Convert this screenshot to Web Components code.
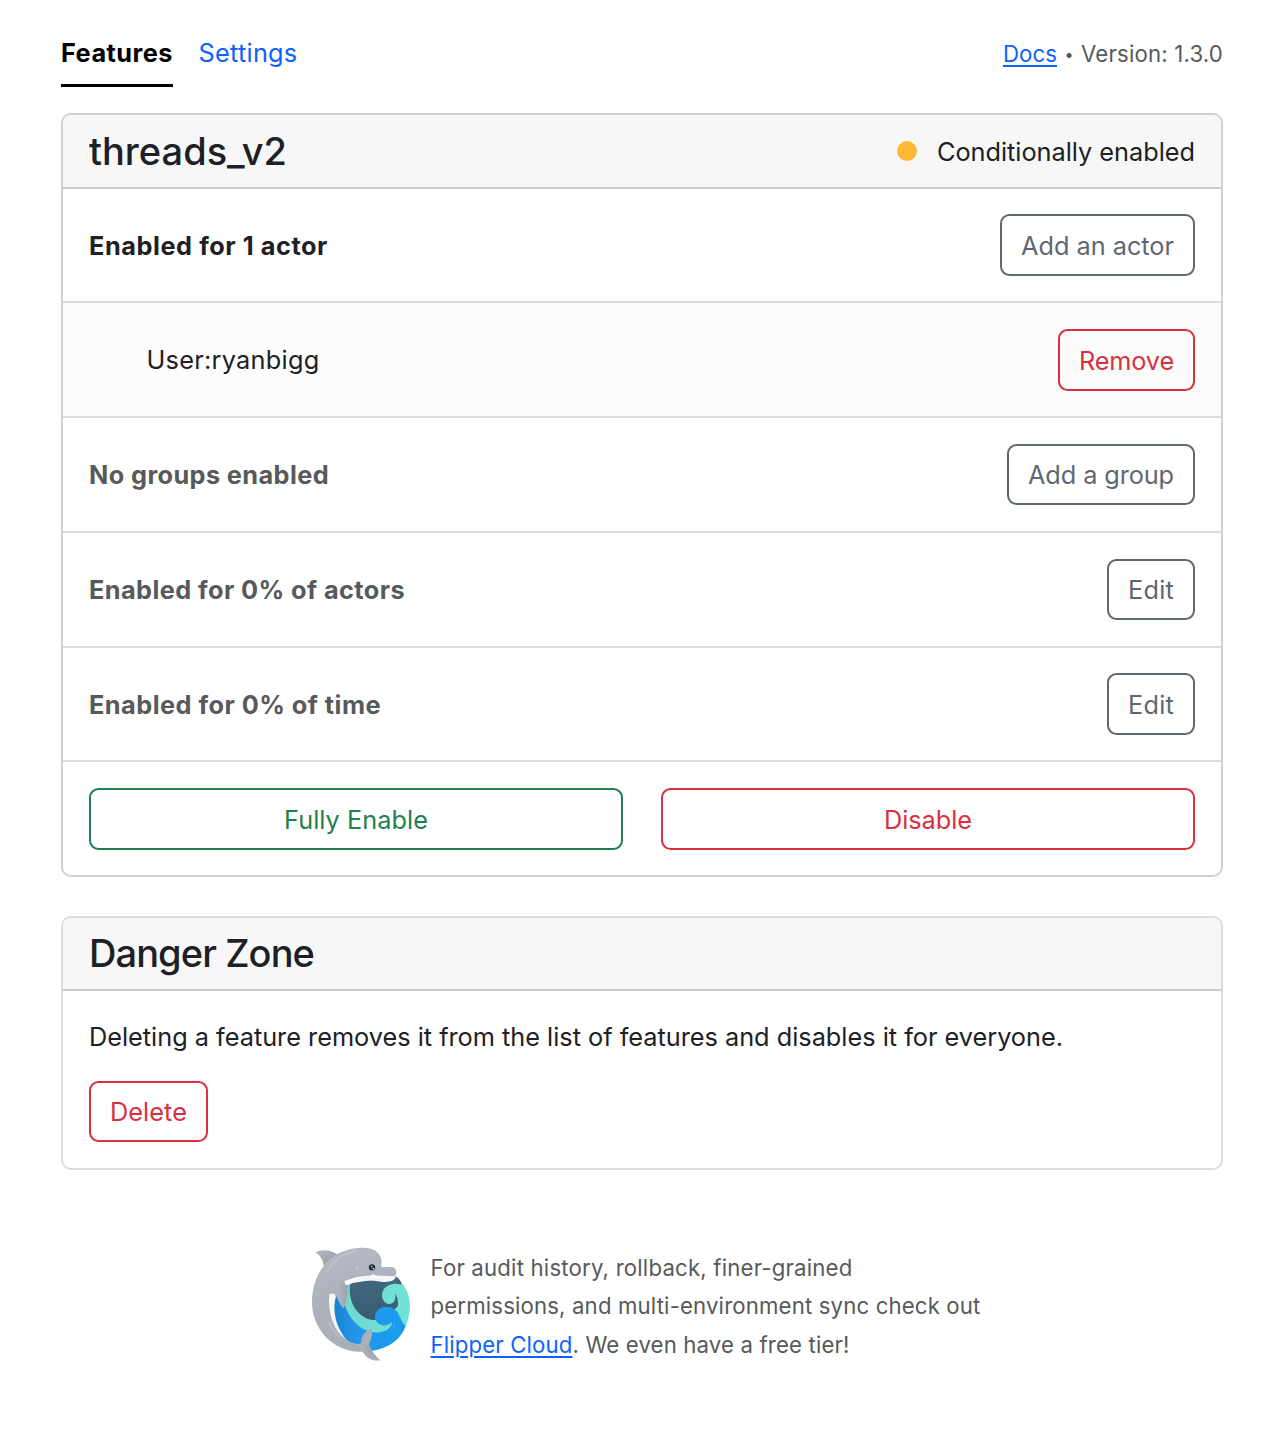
<!DOCTYPE html>
<html lang="en">
<head>
<meta charset="utf-8">
<title>threads_v2 // Flipper</title>
<style>
  body { margin: 0; background: #fff; color: #1d2125; font-family: Inter, "Liberation Sans", sans-serif; font-size: 25.3px; line-height: 38px; }
</style>
</head>
<body>
<flipper-page></flipper-page>
<script>
const define = (name, markup, setup) => {
  const template = document.createElement('template');
  template.innerHTML = markup;
  customElements.define(name, class extends HTMLElement {
    connectedCallback() {
      if (this.shadowRoot) return;
      this.attachShadow({ mode: 'open' }).append(template.content.cloneNode(true));
      if (setup) setup(this);
    }
  });
};

// One line of text, tracked so that it fills the given width.
define('fit-text', `<style>:host{display:inline-block;white-space:nowrap}span{display:inline-block;text-decoration:var(--line,none);text-decoration-thickness:2px;text-underline-offset:3px}</style><span><slot></slot></span>`, el => {
  const span = el.shadowRoot.querySelector('span');
  const want = parseFloat(el.getAttribute('w'));
  const count = el.textContent.length;
  span.style.letterSpacing = ((want - span.getBoundingClientRect().width) / count) + 'px';
  el.style.width = want + 'px';
});

define('ui-button', `<style>
  :host{display:block;flex:none;box-sizing:border-box;height:var(--h,62px);color:#5f6870}
  :host([tone=danger]){color:#d9303f}
  :host([tone=success]){color:#1f7f50}
  :host([wide]){flex:1}
  button{all:unset;box-sizing:border-box;width:100%;height:100%;border:2px solid currentColor;border-radius:9.5px;padding:var(--nudge,2px) 19px 0;display:flex;align-items:center;justify-content:center;cursor:pointer}
</style><button><slot></slot></button>`);

define('ui-card', `<style>
  :host{display:block;border:2px solid var(--edge,#d0d0d0);border-radius:10px;overflow:hidden;background:#fff}
  header{height:var(--head,72px);display:flex;align-items:center;justify-content:space-between;padding:0 26px;background:#f7f7f7;border-bottom:2px solid #cbcbcb}
  h4{margin:0;padding-bottom:var(--lift,0px);font-size:38px;font-weight:500;line-height:46px}
  .s{display:flex;align-items:center;padding-top:2px}
</style><header><h4><slot name="title"></slot></h4><div class="s"><slot name="status"></slot></div></header><slot></slot>`);

define('status-dot', `<style>:host{display:block;width:20px;height:20px;border-radius:50%;background:#fdb935;margin:-2px 20px 0 0}</style>`);

define('gate-row', `<style>
  :host{display:flex;box-sizing:border-box;height:var(--row,115px);padding:var(--top,26px) 26px 0;border-bottom:2px solid #d9dde0;justify-content:space-between;align-items:flex-start;font-weight:700}
  :host([muted]) .label{color:#58595b}
  :host([child]){background:#fcfcfc;font-weight:400;padding-left:83.5px}
  :host([child]) .label{padding-top:0;height:62px}
  :host([last]){border-bottom:0;gap:38px;font-weight:400}
  .label{height:var(--h,62px);display:flex;align-items:center;padding-top:1px;box-sizing:border-box}
  :host([last]) .label{display:none}
  ::slotted(ui-button){font-weight:400}
</style><div class="label"><slot name="label"></slot></div><slot></slot>`);

define('text-link', `<style>a{color:#0d62fe;text-decoration:none;--line:underline}</style><a href="#"><slot></slot></a>`);

define('top-nav', `<style>
  :host{display:flex;justify-content:space-between;height:87px;box-sizing:border-box;padding-top:34px}
  nav{display:flex;gap:25.5px}
  .on{color:#000;font-weight:700;border-bottom:3px solid #000;height:50px}
  .off{color:#0d62fe}
  .meta{display:flex;font-size:22.2px;color:#58595b;padding-top:1px}
  .dot{width:24px;text-align:center;font-size:16px}
</style>
<nav><div class="on"><fit-text w="112">Features</fit-text></div><div class="off"><fit-text w="99">Settings</fit-text></div></nav>
<div class="meta"><text-link><fit-text w="54">Docs</fit-text></text-link><span class="dot">•</span><fit-text w="142">Version: 1.3.0</fit-text></div>`);

define('dolphin-mark', `<style>:host{display:block;flex:none;width:125px;height:135px}svg{display:block}</style>
<svg width="125" height="135" viewBox="0 0 375 405">
  <defs>
    <linearGradient id="body" x1="0" y1="0" x2=".25" y2="1"><stop offset="0" stop-color="#b7bcc6"/><stop offset=".45" stop-color="#adb2bc"/><stop offset="1" stop-color="#a9aeb7"/></linearGradient>
    <linearGradient id="deep" x1="0" y1="0" x2="0" y2="1"><stop offset="0" stop-color="#43687d"/><stop offset="1" stop-color="#31546c"/></linearGradient>
    <linearGradient id="sea" x1="0" y1="0" x2="1" y2="0"><stop offset="0" stop-color="#1580cd"/><stop offset=".3" stop-color="#2396ea"/><stop offset="1" stop-color="#189df2"/></linearGradient>
    <linearGradient id="foam" x1="0" y1="0" x2="1" y2="0"><stop offset="0" stop-color="#6fd8ce"/><stop offset="1" stop-color="#71e2d6"/></linearGradient>
    <linearGradient id="fin" x1="0" y1="0" x2="1" y2="1"><stop offset="0" stop-color="#b5b9c3"/><stop offset="1" stop-color="#9297a2"/></linearGradient>
    <linearGradient id="flip" x1="0" y1="0" x2="1" y2="0"><stop offset=".2" stop-color="#adb2bc"/><stop offset="1" stop-color="#9ea4ae"/></linearGradient>
  </defs>
  <path fill="url(#deep)" d="M120 150 L285 124 Q296 127 305 144 L310 200 L285 240 L218 330 L130 300Z"/>
  <path fill="url(#foam)" d="M305 144 C321 163 330 187 330 212 C330 240 322 262 314 280 L240 335 L160 320 L110 190 L140 150 L151 143 C144 180 156 217 182 239 C200 254 220 258 238 252 L272 225 C290 224 297 213 293 198 C293 189 290 182 285 177 C290 198 277 210 262 206 C247 200 242 181 250 165 C260 149 282 142 305 149Z"/>
  <path fill="url(#sea)" d="M132 151 L151 144 C143 151 136 165 132 190 C132 235 177 293 231 293 C257 291 275 280 276 261 C261 275 242 274 231 262 C217 242 229 220 252 216 C281 213 294 229 301 248 C306 260 311 268 317 274 C303 312 268 340 218 347 C150 350 92 284 99 190Z"/>
  <path fill="none" stroke="#70b8ed" stroke-width="2" stroke-linecap="round" d="M284 266 Q281 279 273 286"/>
  <path fill="url(#fin)" d="M45 52 C69 40 99 46 116 61 L72 95 C69 75 61 60 45 52Z"/>
  <path fill="#f6f7f7" d="M130 148 C180 118 244 120 286 121 Q289 128 281 135 C268 142 255 141 242 140 C209 135 176 135 151 147 Q141 154 133 150Z"/>
  <path fill="#f6f7f7" d="M84 176 Q97 170 108 183 C94 235 112 292 158 334 L144 339 C98 307 80 250 84 176Z"/>
  <path fill="url(#body)" d="M109 59 C135 43 163 37 194 38 C226 39 244 57 245 80 C244 91 242 96 249 97 L275 96 C287 97 292 109 287 121 Q282 125 267 123 C219 119 171 121 133 139 C139 151 145 172 142 188 C140 204 132 214 130 220 C119 208 115 193 105 178 Q97 173 88 177 C82 244 108 307 162 325 C172 328 178 328 184 323 C183 303 193 288 216 281 C218 298 214 313 207 329 C214 345 223 360 241 376 C218 380 199 370 188 350 C106 355 36 287 36 202 C36 140 63 86 109 59Z"/>
  <path fill="url(#flip)" d="M112 142 Q132 133 138 157 C146 180 138 200 130 220 C119 208 115 193 112 182Z"/>
  <path fill="#9298a3" opacity=".35" d="M207 330 C213 345 224 361 241 376 C222 364 204 350 194 338Z"/>
  <path fill="none" stroke="#c8cbd2" stroke-width="3" stroke-linecap="round" d="M82 111 C96 78 128 56 156 52 M88 263 Q97 289 118 307"/>
  <ellipse cx="171" cy="100" rx="5" ry="6" fill="#c1c5cd"/>
  <path fill="#f6f7f7" d="M210 123 Q218 122 220 115 Q221 120 231 124Z"/>
  <circle cx="216" cy="97" r="9.5" fill="#26333d"/><circle cx="215" cy="95" r="2" fill="#eee"/><circle cx="220" cy="101" r="2.3" fill="#fff"/>
</svg>`);

define('cloud-promo', `<style>
  :host{display:flex;margin:65px 0 0 239px;font-size:22.2px;line-height:38.5px;color:#58595b}
  .t{margin:14px 0 0 5.5px}
  .t>div{height:38.4px;white-space:nowrap}
</style><dolphin-mark></dolphin-mark><div class="t">
<div><fit-text w="422">For audit history, rollback, finer-grained</fit-text></div>
<div><fit-text w="550">permissions, and multi-environment sync check out</fit-text></div>
<div><text-link><fit-text w="142">Flipper Cloud</fit-text></text-link><fit-text w="277">. We even have a free tier!</fit-text></div>
</div>`);

define('flipper-page', `<style>
  :host{display:block;box-sizing:border-box;width:1270px;height:1444px;padding:0 47px 0 61px}
  .first{margin-top:26px}
  .second{margin-top:39px;--edge:#d9dde0;--head:71px;--lift:1px}
  .body{padding:27px 26px 26px;display:flex;flex-direction:column;align-items:flex-start;gap:25px}
</style>
<top-nav></top-nav>
<ui-card class="first">
  <fit-text slot="title" w="198">threads_v2</fit-text>
  <status-dot slot="status"></status-dot><fit-text slot="status" w="258">Conditionally enabled</fit-text>
  <gate-row style="--row:114px;--top:25px"><fit-text slot="label" w="239">Enabled for 1 actor</fit-text><ui-button><fit-text w="153">Add an actor</fit-text></ui-button></gate-row>
  <gate-row child><fit-text slot="label" w="173">User:ryanbigg</fit-text><ui-button tone="danger"><fit-text w="95">Remove</fit-text></ui-button></gate-row>
  <gate-row muted style="--h:61px;--nudge:0px"><fit-text slot="label" w="240">No groups enabled</fit-text><ui-button><fit-text w="146">Add a group</fit-text></ui-button></gate-row>
  <gate-row muted style="--h:61px;--nudge:0px"><fit-text slot="label" w="316">Enabled for 0% of actors</fit-text><ui-button><fit-text w="46">Edit</fit-text></ui-button></gate-row>
  <gate-row muted style="--row:114px;--top:25px"><fit-text slot="label" w="292">Enabled for 0% of time</fit-text><ui-button><fit-text w="46">Edit</fit-text></ui-button></gate-row>
  <gate-row last style="--row:113px"><ui-button wide tone="success"><fit-text w="144">Fully Enable</fit-text></ui-button><ui-button wide tone="danger"><fit-text w="88">Disable</fit-text></ui-button></gate-row>
</ui-card>
<ui-card class="second">
  <fit-text slot="title" w="225">Danger Zone</fit-text>
  <div class="body"><fit-text w="974">Deleting a feature removes it from the list of features and disables it for everyone.</fit-text><ui-button tone="danger" style="--h:61px;--nudge:0px"><fit-text w="77">Delete</fit-text></ui-button></div>
</ui-card>
<cloud-promo></cloud-promo>`);
</script>
</body>
</html>
